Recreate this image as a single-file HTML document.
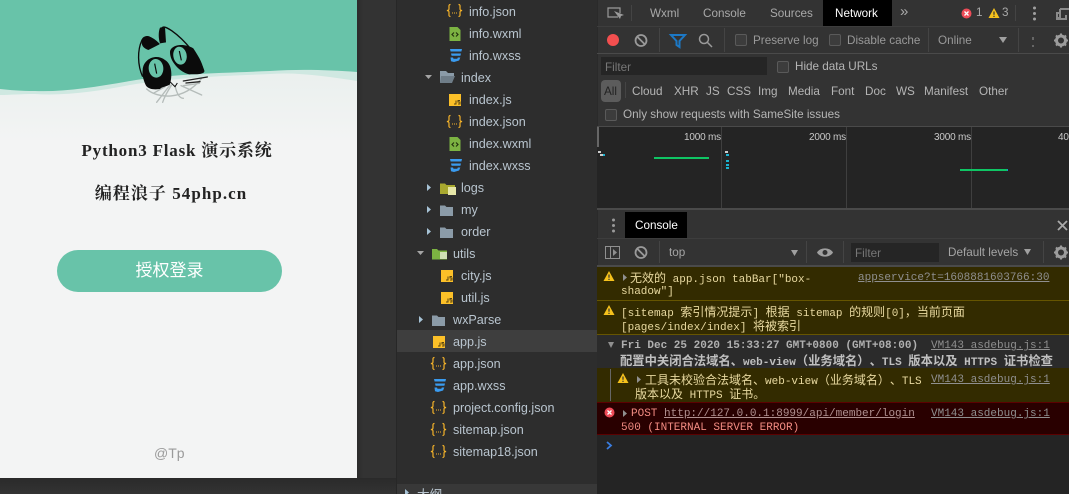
<!DOCTYPE html>
<html><head><meta charset="utf-8"><style>
html,body{margin:0;padding:0;background:#333;}
#r{position:relative;width:1069px;height:494px;overflow:hidden;background:#333;font-family:"Liberation Sans","Noto Sans CJK SC",sans-serif;}
#r div,#r span.a,#r svg{position:absolute;}
.t{white-space:nowrap;line-height:16px;}
.f{color:#b9c5cf;font-size:12.6px;line-height:22px;height:22px;white-space:nowrap;}
.d{color:#a9a9a9;font-size:11.7px;line-height:16px;white-space:nowrap;}
.m{font-family:"Liberation Mono","Noto Sans CJK SC",monospace;font-size:11px;line-height:14px;white-space:pre;text-spacing-trim:space-all;}
.m b{font-weight:inherit;font-size:12px;font-family:"Noto Sans CJK SC",sans-serif;text-spacing-trim:space-all;}
.m.bd b{font-size:12.3px;}
.u{text-decoration:underline;color:#8f8f8f;}
.cb{width:10px;height:10px;border:1px solid #5a5a5a;border-radius:2px;background:#3c3c3c;}
.ms{font-size:10px;letter-spacing:-.2px;color:#c8c8c8;}
</style></head><body><div id="r">
<svg width="0" height="0" style="position:absolute"><defs>
<g id="jso"><path d="M4.500 1.500C2.500 1.500 3 3 3 5S3 7 1 7.500C3 8 3 8 3 10S2.500 13.500 4.500 13.500M12.500 1.500C14.500 1.500 14 3 14 5S14 7 16 7.500C14 8 14 8 14 10S14.500 13.500 12.500 13.500" fill="none" stroke="#f5b32a" stroke-width="1.200"/><path d="M6 10h1M8 10h1M10 10h1" stroke="#f5b32a"/></g>
<g id="js"><rect x="2" y="2" width="12" height="12" fill="#fcc028"/><path d="M9 8.500V12H7M13 8.500h-2V10h2v2h-2" fill="none" stroke="#5a4510" stroke-width="1"/></g>
<g id="wx"><path d="M2.500 1h8l3 3v11h-11z" fill="#7cb342"/><path d="M7 6.500L5 8.500l2 2M9 6.500l2 2-2 2" fill="none" stroke="#24330f" stroke-width="1.200"/></g>
<g id="css"><path d="M3 2h12l-.6 2.500H3.600zM4 6.500h10l-.6 2.300H4.600zM3.500 10.500h2.500l.5 1.300 3.800 0 .5-1.300h2.500l-1.200 3L7 15l-3-.8z" fill="#3a9bef"/></g>
<g id="fol"><path d="M1 3.500h5l1.500 1.500H14v9H1z" fill="#8b9ba8"/></g>
<g id="warn"><path d="M6 1L11.500 11H.5z" fill="#f6c21c"/><path d="M6 4.500v3.300M6 8.800v1.200" stroke="#333" stroke-width="1.200"/></g>
<g id="err"><circle cx="5.500" cy="5.500" r="5" fill="#ee4b57"/><path d="M3.500 3.500l4 4M7.500 3.500l-4 4" stroke="#fff" stroke-width="1.300"/></g>
</defs></svg>

<!-- phone -->
<div style="left:0;top:0;width:357px;height:478px;background:#f3f4f4;overflow:hidden">
<svg style="left:0;top:0" width="357" height="140" viewBox="0 0 357 140">
<defs><linearGradient id="gr" x1="0" y1="0" x2="0" y2="1"><stop offset="0.45" stop-color="#e9efed"/><stop offset="1" stop-color="#f3f4f4"/></linearGradient></defs>
<rect width="357" height="140" fill="url(#gr)"/>
<path d="M0 0H357V81C330 77 300 72 270 74C220 76 170 78 130 85C100 91 65 96 35 94C20 94 10 95 0 95Z" fill="#cfe8e1"/>
<path d="M0 0H357V72C330 70 300 69 270 71C220 73 170 74 130 81C95 87 65 92 35 91C20 91 10 90 0 89Z" fill="#68c3a9"/>
</svg>
<svg style="left:120px;top:15px" width="100" height="100" viewBox="0 0 300 300">
<g fill="none" stroke="#b5bcba" stroke-width="4" stroke-linecap="round"><path d="M80 222C110 250 190 260 245 190"/><path d="M100 235L135 215M110 262L150 210M128 262C135 240 145 225 155 210M165 212C170 235 178 250 190 250M183 212L245 240M190 212L238 205"/></g>
<path d="M68 185C52 150 52 105 66 75C75 58 95 65 118 88M124 42C128 32 138 36 155 47C195 75 240 130 252 170" fill="none" stroke="#0b0b0b" stroke-width="4"/>
<path d="M66 75C78 55 90 60 118 88L105 95L85 105C70 100 62 90 66 75ZM120 38L135 36L138 82L120 85C115 70 115 50 120 38Z" fill="#0b0b0b"/>
<path d="M150 112C150 90 190 82 220 100C240 130 250 150 252 172C240 180 225 177 208 178C180 172 150 140 150 112Z" fill="#0b0b0b"/>
<path d="M68 165C70 130 110 115 135 135C160 150 155 190 150 208C140 215 125 215 120 222C100 225 85 222 78 212C70 195 66 180 68 165Z" fill="#0b0b0b"/>
<ellipse cx="180" cy="122" rx="20" ry="27" fill="#68c3a9" transform="rotate(-10 180 122)"/>
<ellipse cx="108" cy="160" rx="22" ry="28" fill="#68c3a9" transform="rotate(-5 108 160)"/>
<path d="M178 108L184 136M104 146L110 176" stroke="#0b0b0b" stroke-width="3.500" fill="none"/>
<path d="M150 200L165 215L172 204" fill="none" stroke="#0b0b0b" stroke-width="3"/>
<path d="M190 198L262 186M198 204L240 200" stroke="#222" stroke-width="4" stroke-linecap="round" fill="none"/>
</svg>
<div class="t" style="left:59px;top:141px;width:236px;text-align:center;color:#222;letter-spacing:.8px;font:bold 17px/20px 'Liberation Serif','Noto Serif CJK SC',serif;white-space:nowrap">Python3 Flask 演示系统</div>
<div class="t" style="left:71px;top:184px;width:200px;text-align:center;color:#222;letter-spacing:1.050px;font:bold 17px/20px 'Liberation Serif','Noto Serif CJK SC',serif;white-space:nowrap">编程浪子 54php.cn</div>
<div style="left:57px;top:250px;width:225px;height:42px;border-radius:21px;background:#68c3a9;color:#fff;font-size:17px;line-height:42px;text-align:center">授权登录</div>
<div style="left:154px;top:445px;color:#9a9a9a;font-size:14px;line-height:16px">@Tp</div>
</div>
<div style="left:0;top:478px;width:396px;height:16px;background:linear-gradient(#2a2a2a,#333)"></div>
<div style="left:357px;top:0;width:6px;height:478px;background:linear-gradient(90deg,#2b2b2b,#333)"></div>
<div style="left:396px;top:0;width:1px;height:494px;background:#272727"></div>

<!-- tree -->
<div style="left:397px;top:0;width:200px;height:494px;background:#2d2d2d"></div>
<div style="left:397px;top:330px;width:200px;height:22px;background:#3e3e3e"></div>
<div style="left:397px;top:484px;width:200px;height:10px;background:#383838"></div>
<div class="f" style="left:469px;top:1px">info.json</div>
<div class="f" style="left:469px;top:23px">info.wxml</div>
<div class="f" style="left:469px;top:45px">info.wxss</div>
<div class="f" style="left:461px;top:67px">index</div>
<div class="f" style="left:469px;top:89px">index.js</div>
<div class="f" style="left:469px;top:111px">index.json</div>
<div class="f" style="left:469px;top:133px">index.wxml</div>
<div class="f" style="left:469px;top:155px">index.wxss</div>
<div class="f" style="left:461px;top:177px">logs</div>
<div class="f" style="left:461px;top:199px">my</div>
<div class="f" style="left:461px;top:221px">order</div>
<div class="f" style="left:453px;top:243px">utils</div>
<div class="f" style="left:461px;top:265px">city.js</div>
<div class="f" style="left:461px;top:287px">util.js</div>
<div class="f" style="left:453px;top:309px">wxParse</div>
<div class="f" style="left:453px;top:331px">app.js</div>
<div class="f" style="left:453px;top:353px">app.json</div>
<div class="f" style="left:453px;top:375px">app.wxss</div>
<div class="f" style="left:453px;top:397px">project.config.json</div>
<div class="f" style="left:453px;top:419px">sitemap.json</div>
<div class="f" style="left:453px;top:441px">sitemap18.json</div>
<div class="f" style="left:417px;top:484px">大纲</div>
<svg style="left:397px;top:0" width="200" height="494" viewBox="397 0 200 494">
<use href="#jso" x="446" y="3"/><use href="#wx" x="447" y="26"/><use href="#css" x="447" y="47"/>
<use href="#js" x="447" y="92"/><use href="#jso" x="446" y="114"/><use href="#wx" x="447" y="136"/><use href="#css" x="447" y="157"/>
<use href="#js" x="439" y="268"/><use href="#js" x="439" y="290"/>
<use href="#js" x="431" y="334"/><use href="#jso" x="430" y="356"/><use href="#css" x="431" y="377"/><use href="#jso" x="430" y="400"/><use href="#jso" x="430" y="422"/><use href="#jso" x="430" y="444"/>
<path d="M425 75h7l-3.500 4z" fill="#a5a5a5"/><path d="M417 251h7l-3.500 4z" fill="#a5a5a5"/>
<path d="M427 184l4 3.500-4 3.500zM427 206l4 3.500-4 3.500zM427 228l4 3.500-4 3.500zM419 316l4 3.500-4 3.500zM405 489l4 3.500-4 3.500z" fill="#a7c3d6"/>
<path d="M440 71h6l2 2h6v3h-11l-3 7z" fill="#8b9ba8"/><path d="M441 76h14l-3 7h-12z" fill="#6f7d88"/>
<path d="M440 183.500h5l1.500 1.500H455v9H440z" fill="#a8a82e"/><rect x="448" y="187" width="8" height="8" fill="#e6e6a8"/>
<use href="#fol" x="439" y="202"/><use href="#fol" x="439" y="224"/><use href="#fol" x="431" y="312"/>
<path d="M432 249h5l1.500 1.500H447v9H432z" fill="#7cb342"/><rect x="440" y="252" width="7" height="7" fill="#cfe0b5"/>
</svg>

<!-- devtools top -->
<div style="left:597px;top:0;width:472px;height:494px;background:#333"></div>
<div style="left:597px;top:0;width:1px;height:494px;background:#2a2a2a"></div>
<div style="left:597px;top:26px;width:472px;height:1px;background:#3d3d3d"></div>
<div style="left:823px;top:0;width:69px;height:26px;background:#000"></div>
<div class="d t" style="left:650px;top:6px">Wxml</div>
<div class="d t" style="left:703px;top:6px">Console</div>
<div class="d t" style="left:770px;top:6px">Sources</div>
<div class="d t" style="left:835px;top:6px;color:#fff">Network</div>
<div class="d t" style="left:900px;top:4px;font-size:15px">»</div>
<div class="d t" style="left:976px;top:5px">1</div>
<div class="d t" style="left:1002px;top:5px">3</div>
<svg style="left:597px;top:0" width="472" height="265" viewBox="597 0 472 265">
<path d="M618 17h-10V8h12v5" fill="none" stroke="#9a9a9a" stroke-width="1.200"/><path d="M614 11l6 8 1-3 3-1z" fill="#9a9a9a"/>
<path d="M631.500 5v16M1015.500 5v16" stroke="#444"/>
<use href="#err" x="961" y="8"/><use href="#warn" x="988" y="7"/>
<circle cx="1034.500" cy="8" r="1.500" fill="#a0a0a0"/><circle cx="1034.500" cy="13.500" r="1.500" fill="#a0a0a0"/><circle cx="1034.500" cy="19" r="1.500" fill="#a0a0a0"/>
<path d="M1060 9h9M1060 9v9h-3v-5h3M1057 13v6h9v-4" fill="none" stroke="#8a8a8a" stroke-width="2"/>
<circle cx="613" cy="40" r="6" fill="#f34f4f"/>
<g fill="none" stroke="#9a9a9a" stroke-width="1.800"><circle cx="641" cy="40.500" r="5.500"/><path d="M637 36.500l8 8"/></g>
<path d="M659.500 28v24M724.500 28v24M928.500 28v24M1018.500 28v24" stroke="#444"/>
<path d="M671 35h14l-5.500 6v6l-3-2v-4z" fill="none" stroke="#1c78c5" stroke-width="2"/>
<g fill="none" stroke="#9a9a9a" stroke-width="1.500"><circle cx="704" cy="39" r="4.500"/><path d="M707.500 42.500l4.500 4.500"/></g>
<path d="M999 37h8l-4 6z" fill="#a0a0a0"/>
<path d="M1033 37v3M1033 45v2" stroke="#999"/>
<g transform="translate(1061 40.500)"><circle r="4.500" fill="none" stroke="#9c9c9c" stroke-width="3"/><path d="M0-7v3M0 4v3M-7 0h3M4 0h3M-5-5l2 2M3 3l2 2M-5 5l2-2M3-3l2-2" stroke="#9c9c9c" stroke-width="2"/></g>
</svg>
<div class="cb" style="left:735px;top:34px"></div>
<div class="d t" style="left:753px;top:33px;color:#999">Preserve log</div>
<div class="cb" style="left:829px;top:34px"></div>
<div class="d t" style="left:847px;top:33px;color:#999">Disable cache</div>
<div class="d t" style="left:938px;top:33px;color:#999">Online</div>
<div style="left:597px;top:53px;width:472px;height:1px;background:#4a4a4a"></div>
<div style="left:601px;top:57px;width:166px;height:18px;background:#252525"></div>
<div class="d t" style="left:605px;top:60px;color:#777">Filter</div>
<div class="cb" style="left:777px;top:61px"></div>
<div class="d t" style="left:795px;top:59px;color:#b5b5b5">Hide data URLs</div>
<div style="left:601px;top:80px;width:20px;height:22px;border-radius:4px;background:#5c5c5c"></div>
<div class="d t" style="left:604px;top:84px;color:#222">All</div>
<div style="left:625px;top:82px;width:1px;height:16px;background:#444"></div>
<div class="d t" style="left:632px;top:84px;color:#b5b5b5">Cloud</div>
<div class="d t" style="left:674px;top:84px;color:#b5b5b5">XHR</div>
<div class="d t" style="left:706px;top:84px;color:#b5b5b5">JS</div>
<div class="d t" style="left:727px;top:84px;color:#b5b5b5">CSS</div>
<div class="d t" style="left:758px;top:84px;color:#b5b5b5">Img</div>
<div class="d t" style="left:788px;top:84px;color:#b5b5b5">Media</div>
<div class="d t" style="left:831px;top:84px;color:#b5b5b5">Font</div>
<div class="d t" style="left:865px;top:84px;color:#b5b5b5">Doc</div>
<div class="d t" style="left:896px;top:84px;color:#b5b5b5">WS</div>
<div class="d t" style="left:924px;top:84px;color:#b5b5b5">Manifest</div>
<div class="d t" style="left:979px;top:84px;color:#b5b5b5">Other</div>
<div class="cb" style="left:605px;top:109px"></div>
<div class="d t" style="left:623px;top:107px;color:#b5b5b5">Only show requests with SameSite issues</div>

<!-- timeline -->
<div style="left:597px;top:126px;width:472px;height:82px;background:#242424;border-top:1px solid #4a4a4a;box-sizing:border-box"></div>
<div style="left:597px;top:127px;width:2px;height:20px;background:#666"></div>
<div style="left:721px;top:127px;width:1px;height:81px;background:#3f3f3f"></div>
<div style="left:846px;top:127px;width:1px;height:81px;background:#3f3f3f"></div>
<div style="left:971px;top:127px;width:1px;height:81px;background:#3f3f3f"></div>
<div class="t ms" style="left:684px;top:130px">1000 ms</div>
<div class="t ms" style="left:809px;top:130px">2000 ms</div>
<div class="t ms" style="left:934px;top:130px">3000 ms</div>
<div class="t ms" style="left:1058px;top:130px">4000 ms</div>
<div style="left:598px;top:151px;width:3px;height:2px;background:#ccc"></div>
<div style="left:600px;top:154px;width:3px;height:2px;background:#ccc"></div>
<div style="left:603px;top:154px;width:2px;height:2px;background:#1ab3d0"></div>
<div style="left:654px;top:157px;width:55px;height:2px;background:#0fc564"></div>
<div style="left:725px;top:151px;width:3px;height:2px;background:#ccc"></div>
<div style="left:726px;top:154px;width:3px;height:2px;background:#1ab3d0"></div>
<div style="left:726px;top:160px;width:3px;height:2px;background:#1ab3d0"></div>
<div style="left:726px;top:164px;width:3px;height:2px;background:#1ab3d0"></div>
<div style="left:726px;top:167px;width:3px;height:2px;background:#1ab3d0"></div>
<div style="left:960px;top:169px;width:47px;height:2px;background:#0fc564"></div>
<div style="left:1007px;top:169px;width:1px;height:2px;background:#1a8fd0"></div>
<div style="left:597px;top:208px;width:472px;height:2px;background:#4a4a4a"></div>

<!-- drawer -->
<div style="left:625px;top:212px;width:62px;height:26px;background:#000"></div>
<div class="d t" style="left:635px;top:218px;color:#fff">Console</div>
<div style="left:597px;top:238px;width:472px;height:1px;background:#3d3d3d"></div>
<svg style="left:597px;top:210px" width="472" height="56" viewBox="597 210 472 56">
<circle cx="613.500" cy="220" r="1.500" fill="#999"/><circle cx="613.500" cy="225.500" r="1.500" fill="#999"/><circle cx="613.500" cy="231" r="1.500" fill="#999"/>
<path d="M1058 221l9 9M1067 221l-9 9" stroke="#aaa" stroke-width="1.800"/>
<rect x="605.500" y="246.500" width="14" height="12" fill="none" stroke="#909090"/><path d="M610.500 246.500v12" stroke="#909090"/><path d="M613 249l4 3.500-4 3.500z" fill="#909090"/>
<g fill="none" stroke="#9a9a9a" stroke-width="1.800"><circle cx="641" cy="252.500" r="5.500"/><path d="M637 248.500l8 8"/></g>
<path d="M659.500 241v22M806.500 241v22M843.500 241v22M1043.500 241v22" stroke="#444"/>
<path d="M791 250h7l-3.500 6z" fill="#a0a0a0"/>
<path d="M817 252.500C820 247 830 247 833 252.500C830 258 820 258 817 252.500Z" fill="#a0a0a0"/><circle cx="825" cy="252.500" r="2.500" fill="#333"/>
<path d="M1024 249h7l-3.500 6z" fill="#a0a0a0"/>
<g transform="translate(1061 252.500)"><circle r="4.500" fill="none" stroke="#9c9c9c" stroke-width="3"/><path d="M0-7v3M0 4v3M-7 0h3M4 0h3M-5-5l2 2M3 3l2 2M-5 5l2-2M3-3l2-2" stroke="#9c9c9c" stroke-width="2"/></g>
</svg>
<div class="d t" style="left:669px;top:245px;color:#a5a5a5">top</div>
<div style="left:851px;top:243px;width:88px;height:19px;background:#252525"></div>
<div class="d t" style="left:855px;top:246px;color:#777">Filter</div>
<div class="d t" style="left:948px;top:245px;color:#a5a5a5">Default levels</div>

<!-- console -->
<div style="left:597px;top:265px;width:472px;height:229px;background:#242424"></div>
<div style="left:597px;top:265px;width:472px;height:2px;background:#4a4a4a"></div>
<div style="left:597px;top:267px;width:472px;height:33px;background:#332b00;border-bottom:1px solid #665500"></div>
<div style="left:597px;top:301px;width:472px;height:33px;background:#332b00;border-bottom:1px solid #665500"></div>
<div style="left:597px;top:335px;width:472px;height:33px;background:#2b2b2b"></div>
<div style="left:597px;top:368px;width:472px;height:34px;background:#332b00"></div>
<div style="left:597px;top:402px;width:472px;height:33px;background:#290000;border-top:1px solid #5c0000;border-bottom:1px solid #5c0000;box-sizing:border-box"></div>
<div style="left:610px;top:369px;width:1px;height:32px;background:#666"></div>
<div class="m" style="left:630px;top:271px;color:#e8d9a0"><b>无效的</b> app.json tabBar["box-</div>
<div class="m" style="left:621px;top:285px;color:#e8d9a0">shadow"]</div>
<div class="m u" style="left:858px;top:271px">appservice?t=1608881603766:30</div>
<div class="m" style="left:621px;top:305px;color:#e8d9a0">[sitemap <b>索引情况提示</b>] <b>根据</b> sitemap <b>的规则</b>[0]<b>，当前页面</b></div>
<div class="m" style="left:621px;top:319px;color:#e8d9a0">[pages/index/index] <b>将被索引</b></div>
<div class="m" style="left:621px;top:339px;color:#b0b0b0;font-weight:bold">Fri Dec 25 2020 15:33:27 GMT+0800 (GMT+08:00)</div>
<div class="m u" style="left:931px;top:339px">VM143 asdebug.js:1</div>
<div class="m bd" style="left:620px;top:353px;color:#c0c0c0;font-weight:bold"><b>配置中关闭合法域名、</b>web-view<b>（业务域名）、</b>TLS <b>版本以及</b> HTTPS <b>证书检查</b></div>
<div class="m" style="left:645px;top:373px;color:#e8d9a0"><b>工具未校验合法域名、</b>web-view<b>（业务域名）、</b>TLS</div>
<div class="m" style="left:635px;top:387px;color:#e8d9a0"><b>版本以及</b> HTTPS <b>证书。</b></div>
<div class="m u" style="left:931px;top:373px">VM143 asdebug.js:1</div>
<div class="m" style="left:631px;top:407px;color:#f28b82">POST <span style="text-decoration:underline;color:#b09090">http://127.0.0.1:8999/api/member/login</span></div>
<div class="m u" style="left:931px;top:407px">VM143 asdebug.js:1</div>
<div class="m" style="left:621px;top:421px;color:#f28b82">500 (INTERNAL SERVER ERROR)</div>
<svg style="left:597px;top:265px" width="472" height="229" viewBox="597 265 472 229">
<use href="#warn" x="603" y="270"/><use href="#warn" x="603" y="304"/><use href="#warn" x="617" y="372"/><use href="#err" x="604" y="407"/>
<path d="M623 274l4 3.500-4 3.500zM637 376l4 3.500-4 3.500zM623 410l4 3.500-4 3.500z" fill="#909090"/>
<path d="M608 342h6l-3 6z" fill="#909090"/>
<path d="M607 442l4 3.500-4 3.500" fill="none" stroke="#3a7de0" stroke-width="1.800"/>
</svg>
</div></body></html>
